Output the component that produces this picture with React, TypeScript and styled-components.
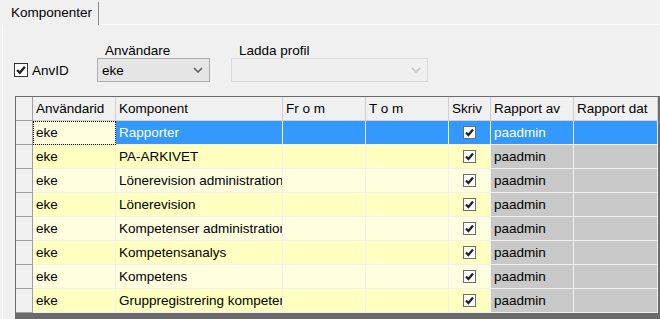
import React from "react";
import styled, { createGlobalStyle } from "styled-components";

const GlobalStyle = createGlobalStyle`
  html, body {
    margin: 0;
    padding: 0;
    background: #f0f0f0;
    overflow: hidden;
  }
  body {
    font-family: "Liberation Sans", Arial, sans-serif;
    font-size: 13.5px;
    color: #000;
  }
`;

const Window = styled.div`
  width: 660px;
  height: 319px;
  display: flex;
  flex-direction: column;
  overflow: hidden;
`;

const TabStrip = styled.div`
  display: flex;
  height: 25px;
  flex-shrink: 0;
`;

const Tab = styled.div`
  width: 87px;
  height: 23px;
  margin-top: 2px;
  padding-left: 11px;
  line-height: 21px;
  border-right: 1px solid #8c8c8c;
  white-space: nowrap;
`;

const TabRest = styled.div`
  flex: 1;
  border-bottom: 1px solid #ffffff;
  height: 24px;
`;

const Panel = styled.div`
  flex: 1;
  display: flex;
  flex-direction: column;
  margin-left: 2px;
  border-left: 1px solid #ffffff;
  min-height: 0;
`;

const Controls = styled.div`
  display: flex;
  align-items: flex-end;
  padding: 19px 0 0 11px;
  height: 38px;
  flex-shrink: 0;
`;

const CheckField = styled.label`
  display: flex;
  align-items: center;
  gap: 4px;
  height: 24px;
  width: 83px;
`;

const Box = styled.span<{ $size?: number; $border?: string }>`
  box-sizing: border-box;
  display: inline-flex;
  align-items: center;
  justify-content: center;
  width: ${(p) => p.$size || 13}px;
  height: ${(p) => p.$size || 13}px;
  background: #ffffff;
  border: 1px solid ${(p) => p.$border || "#333333"};
`;

const Field = styled.div<{ $width: number; $gap?: number }>`
  display: flex;
  flex-direction: column;
  width: ${(p) => p.$width}px;
  margin-right: ${(p) => p.$gap || 0}px;
`;

const FieldLabel = styled.div`
  height: 14px;
  line-height: 14px;
  padding-left: 8px;
  white-space: nowrap;
`;

const Combo = styled.div<{ $disabled?: boolean }>`
  box-sizing: border-box;
  height: 24px;
  display: flex;
  align-items: center;
  justify-content: space-between;
  padding: 0 6px 0 4px;
  border: 1px solid ${(p) => (p.$disabled ? "#d9d9d9" : "#adadad")};
  background: ${(p) => (p.$disabled ? "#efefef" : "#e5e5e5")};
`;

const GridFrame = styled.div`
  flex: 1;
  margin: 14px 0 0 12px;
  border-left: 1px solid #6b6b6b;
  border-top: 1px solid #6b6b6b;
  background: #6b6b6b;
  overflow: hidden;
`;

const Row = styled.div`
  display: grid;
  grid-template-columns: 17px 83px 167px 83px 83px 42px 83px 84px;
  height: 24px;
`;

type Tone = "header" | "rowhead" | "odd" | "even" | "selected" | "locked" | "focus";

const toneBg: Record<Tone, string> = {
  header: "#f0f0f0",
  rowhead: "#f0f0f0",
  odd: "#ffffe0",
  even: "#ffffc0",
  selected: "#3399ff",
  locked: "#c8c8c8",
  focus: "#ffffe0",
};

const toneLine: Record<Tone, string> = {
  header: "#d0d0d0",
  rowhead: "#a0a0a0",
  odd: "#f0f0f0",
  even: "#f0f0f0",
  selected: "#f0f0f0",
  locked: "#f0f0f0",
  focus: "#f0f0f0",
};

const Cell = styled.div<{ $tone: Tone; $center?: boolean }>`
  box-sizing: border-box;
  height: 24px;
  padding: 0 0 0 3px;
  line-height: 23px;
  white-space: nowrap;
  overflow: hidden;
  background: ${(p) => toneBg[p.$tone]};
  color: ${(p) => (p.$tone === "selected" ? "#ffffff" : "#000000")};
  border-right: 1px solid ${(p) => toneLine[p.$tone]};
  border-bottom: 1px solid ${(p) => toneLine[p.$tone]};
  ${(p) => (p.$tone === "focus" ? "outline: 1px dotted #000; outline-offset: -1px;" : "")}
  ${(p) =>
    p.$center
      ? "display: flex; align-items: center; justify-content: center; padding: 0;"
      : ""}
`;

const Chevron = ({ color }: { color: string }) => (
  <svg width="10" height="6" viewBox="0 0 10 6">
    <polyline points="1,1 5,5 9,1" fill="none" stroke={color} strokeWidth="1.6" />
  </svg>
);

const Tick = ({ w = 9 }: { w?: number }) => (
  <svg width={w} height={w} viewBox="0 0 9 9">
    <polyline points="1,4.5 3.4,7 8,1.5" fill="none" stroke="#222" strokeWidth="2.2" />
  </svg>
);

const headers = ["Användarid", "Komponent", "Fr o m", "T o m", "Skriv", "Rapport av", "Rapport dat"];

const komponenter = [
  "Rapporter",
  "PA-ARKIVET",
  "Lönerevision administration",
  "Lönerevision",
  "Kompetenser administration",
  "Kompetensanalys",
  "Kompetens",
  "Gruppregistrering kompetens",
];

export default function App() {
  return (
    <Window>
      <GlobalStyle />
      <TabStrip>
        <Tab>Komponenter</Tab>
        <TabRest />
      </TabStrip>
      <Panel>
        <Controls>
          <CheckField>
            <Box $size={14}>
              <Tick w={10} />
            </Box>
            AnvID
          </CheckField>
          <Field $width={113} $gap={21}>
            <FieldLabel>Användare</FieldLabel>
            <Combo>
              eke
              <Chevron color="#606060" />
            </Combo>
          </Field>
          <Field $width={197}>
            <FieldLabel>Ladda profil</FieldLabel>
            <Combo $disabled>
              <span />
              <Chevron color="#c4c4c4" />
            </Combo>
          </Field>
        </Controls>
        <GridFrame>
          <Row>
            <Cell $tone="rowhead" />
            {headers.map((h) => (
              <Cell key={h} $tone="header">
                {h}
              </Cell>
            ))}
          </Row>
          {komponenter.map((k, i) => {
            const sel = i === 0;
            const base: Tone = sel ? "selected" : i % 2 === 1 ? "even" : "odd";
            return (
              <Row key={k}>
                <Cell $tone="rowhead" />
                <Cell $tone={sel ? "focus" : base}>eke</Cell>
                <Cell $tone={base}>{k}</Cell>
                <Cell $tone={base} />
                <Cell $tone={base} />
                <Cell $tone={base} $center>
                  <Box $border="#6d6d6d">
                    <Tick />
                  </Box>
                </Cell>
                <Cell $tone={sel ? "selected" : "locked"}>paadmin</Cell>
                <Cell $tone={sel ? "selected" : "locked"} />
              </Row>
            );
          })}
        </GridFrame>
      </Panel>
    </Window>
  );
}
